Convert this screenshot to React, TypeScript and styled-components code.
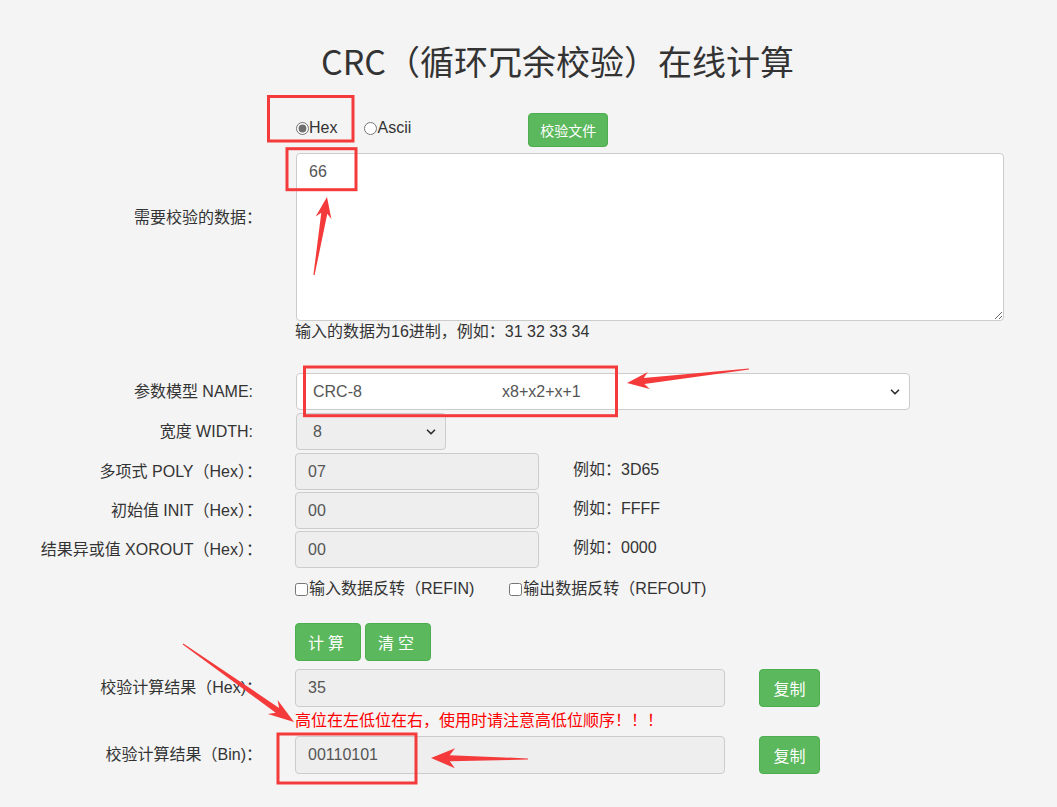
import React from 'react';
import styled, { createGlobalStyle } from 'styled-components';
import { ChevronDown } from 'lucide-react';

const GlobalStyle = createGlobalStyle`
  html, body {
    margin: 0;
    padding: 0;
    background: #f4f4f4;
  }
  body {
    font-family: "Liberation Sans", "Noto Sans CJK SC", sans-serif;
    font-size: 16px;
    line-height: 20px;
    color: #333;
  }
  * {
    box-sizing: border-box;
  }
`;

const Page = styled.div`
  position: relative;
  width: 1057px;
  min-height: 807px;
  overflow: hidden;
`;

const Title = styled.h1`
  margin: 0;
  padding: 43px 0 0 58px;
  text-align: center;
  font-family: "Noto Sans CJK SC", sans-serif;
  font-weight: normal;
  font-size: 34px;
  line-height: 36px;
  color: #333;
`;

const Form = styled.div`
  width: 1003px;
`;

const Row = styled.div<{ $mt: number }>`
  display: grid;
  grid-template-columns: 262px 1fr;
  column-gap: 33px;
  align-items: center;
  margin-top: ${p => p.$mt}px;
`;

const Label = styled.div<{ $top?: boolean; $pr?: number }>`
  text-align: right;
  font-size: 16px;
  line-height: 20px;
  white-space: nowrap;
  color: #333;
  align-self: ${p => (p.$top ? 'start' : 'center')};
  padding-top: ${p => (p.$top ? '55px' : '0')};
  padding-right: ${p => p.$pr ?? 0}px;
`;

const Content = styled.div`
  display: flex;
  align-items: center;
`;

const Stack = styled.div`
  display: flex;
  flex-direction: column;
`;

const Radios = styled.div`
  display: flex;
  align-items: center;
  margin-bottom: 4px;
`;

const RadioLabel = styled.label`
  display: flex;
  align-items: center;
  font-size: 16px;
  line-height: 20px;
  color: #333;
  margin-right: 26px;

  input {
    margin: 0 0 0 1px;
    width: 13px;
    height: 13px;
    accent-color: #6f6f6f;
  }

  &:last-child {
    margin-right: 0;
  }
`;

const GreenButton = styled.button<{ $h: number; $fs: number; $px: number; $ls?: number }>`
  height: ${p => p.$h}px;
  padding: 0 ${p => p.$px}px;
  background: #5cb85c;
  border: 1px solid #4cae4c;
  border-radius: 4px;
  color: #fff;
  font-family: "Liberation Sans", "Noto Sans CJK SC", sans-serif;
  font-size: ${p => p.$fs}px;
  letter-spacing: ${p => p.$ls ?? 0}px;
  cursor: pointer;
  white-space: nowrap;
`;

const FileButton = styled(GreenButton)`
  margin-left: 117px;
`;

const TextArea = styled.textarea`
  width: 708px;
  height: 168px;
  margin: 0 0 0 1px;
  padding: 8px 12px 6px;
  background: #fff;
  border: 1px solid #ccc;
  border-radius: 4px;
  font-family: "Liberation Sans", "Noto Sans CJK SC", sans-serif;
  font-size: 16px;
  line-height: 20px;
  color: #555;
  outline: none;
  display: block;
`;

const Hint = styled.div`
  margin-top: 1px;
  font-size: 16px;
  line-height: 20px;
  color: #333;
`;

const SelectBox = styled.div<{ $w: number; $gray?: boolean }>`
  display: flex;
  align-items: center;
  width: ${p => p.$w}px;
  height: 37px;
  margin-left: 1px;
  padding: 0 7px 0 16px;
  background: ${p => (p.$gray ? '#eee' : '#fff')};
  border: 1px solid #ccc;
  border-radius: 4px;
  color: #555;
  font-size: 16px;
`;

const SelectValue = styled.div`
  flex: 1;
  display: flex;
  white-space: nowrap;
`;

const ModelName = styled.span`
  width: 189px;
`;

const Chevron = styled(ChevronDown)`
  color: #333;
  flex: none;
`;

const Field = styled.input<{ $w: number; $h?: number }>`
  width: ${p => p.$w}px;
  height: ${p => p.$h ?? 37}px;
  margin: 0;
  padding: 0 12px;
  background: #eee;
  border: 1px solid #ccc;
  border-radius: 4px;
  font-family: "Liberation Sans", "Noto Sans CJK SC", sans-serif;
  font-size: 16px;
  color: #555;
  outline: none;
`;

const Example = styled.span`
  display: block;
  margin: -3px 0 0 34px;
  font-size: 16px;
  line-height: 20px;
  color: #333;
`;

const Checks = styled.div`
  display: flex;
  align-items: center;
  gap: 35px;
`;

const CheckLabel = styled.label`
  display: flex;
  align-items: center;
  font-size: 16px;
  line-height: 20px;
  color: #333;

  input {
    margin: 0 1px 0 0;
    width: 13px;
    height: 13px;
  }
`;

const Buttons = styled.div`
  display: flex;
  gap: 4px;
`;

const CopyButton = styled(GreenButton)`
  margin-left: 34px;
  width: 61px;
  padding: 0;
`;

const Warn = styled.div`
  margin-top: 2px;
  font-size: 16px;
  line-height: 20px;
  color: #f00;
`;

const Overlay = styled.svg`
  position: absolute;
  left: 0;
  top: 0;
  pointer-events: none;
`;

const RED = '#f43a3a';

type Arrow = { t: [number, number]; p: [number, number]; l: number; w: number };

const boxes = [
  { x: 268.5, y: 96.5, w: 84.5, h: 44.5 },
  { x: 287, y: 148.7, w: 69, h: 41 },
  { x: 304.5, y: 367, w: 312, h: 48.7 },
  { x: 278, y: 734, w: 138, h: 49 },
];

const arrows: Arrow[] = [
  { t: [314, 275], p: [327, 197], l: 21, w: 16 },
  { t: [749, 369], p: [627, 383], l: 22, w: 17 },
  { t: [183, 644], p: [294, 722], l: 26, w: 17 },
  { t: [528, 759], p: [431, 758], l: 24, w: 20 },
];

function arrowPoints({ t, p, l, w }: Arrow) {
  const dx = p[0] - t[0];
  const dy = p[1] - t[1];
  const len = Math.hypot(dx, dy);
  const ux = dx / len;
  const uy = dy / len;
  const nx = -uy;
  const ny = ux;
  const bx = p[0] - ux * l;
  const by = p[1] - uy * l;
  const jx = p[0] - ux * l * 0.78;
  const jy = p[1] - uy * l * 0.78;
  const neck = 3;
  const pts = [
    [t[0] + nx * 0.6, t[1] + ny * 0.6],
    [jx + nx * neck, jy + ny * neck],
    [bx + (nx * w) / 2, by + (ny * w) / 2],
    [p[0], p[1]],
    [bx - (nx * w) / 2, by - (ny * w) / 2],
    [jx - nx * neck, jy - ny * neck],
    [t[0] - nx * 0.6, t[1] - ny * 0.6],
  ];
  return pts.map(q => `${q[0].toFixed(1)},${q[1].toFixed(1)}`).join(' ');
}

const Annotations = () => (
  <Overlay width={1057} height={807} viewBox="0 0 1057 807">
    {boxes.map((b, i) => (
      <rect key={i} x={b.x} y={b.y} width={b.w} height={b.h} fill="none" stroke={RED} strokeWidth={3} />
    ))}
    {arrows.map((a, i) => (
      <polygon key={i} points={arrowPoints(a)} fill={RED} />
    ))}
  </Overlay>
);

const App = () => {
  return (
    <Page>
      <GlobalStyle />
      <Title>CRC（循环冗余校验）在线计算</Title>

      <Form>
        <Row $mt={34}>
          <Label />
          <Content>
            <Radios>
              <RadioLabel>
                <input type="radio" name="fmt" defaultChecked />
                Hex
              </RadioLabel>
              <RadioLabel>
                <input type="radio" name="fmt" />
                Ascii
              </RadioLabel>
            </Radios>
            <FileButton $h={34} $fs={14} $px={11}>校验文件</FileButton>
          </Content>
        </Row>

        <Row $mt={6}>
          <Label $top>需要校验的数据：</Label>
          <Stack>
            <TextArea defaultValue="66" />
            <Hint>输入的数据为16进制，例如：31 32 33 34</Hint>
          </Stack>
        </Row>

        <Row $mt={31}>
          <Label $pr={9}>参数模型 NAME:</Label>
          <Content>
            <SelectBox $w={614}>
              <SelectValue>
                <ModelName>CRC-8</ModelName>
                <span>x8+x2+x+1</span>
              </SelectValue>
              <Chevron size={14} strokeWidth={3} />
            </SelectBox>
          </Content>
        </Row>

        <Row $mt={3}>
          <Label $pr={9}>宽度 WIDTH:</Label>
          <Content>
            <SelectBox $w={150} $gray>
              <SelectValue>8</SelectValue>
              <Chevron size={14} strokeWidth={3} />
            </SelectBox>
          </Content>
        </Row>

        <Row $mt={3}>
          <Label>多项式 POLY（Hex）：</Label>
          <Content>
            <Field $w={244} readOnly defaultValue="07" />
            <Example>例如：3D65</Example>
          </Content>
        </Row>

        <Row $mt={2}>
          <Label>初始值 INIT（Hex）：</Label>
          <Content>
            <Field $w={244} readOnly defaultValue="00" />
            <Example>例如：FFFF</Example>
          </Content>
        </Row>

        <Row $mt={2}>
          <Label>结果异或值 XOROUT（Hex）：</Label>
          <Content>
            <Field $w={244} readOnly defaultValue="00" />
            <Example>例如：0000</Example>
          </Content>
        </Row>

        <Row $mt={11}>
          <Label />
          <Checks>
            <CheckLabel>
              <input type="checkbox" />
              输入数据反转（REFIN)
            </CheckLabel>
            <CheckLabel>
              <input type="checkbox" />
              输出数据反转（REFOUT)
            </CheckLabel>
          </Checks>
        </Row>

        <Row $mt={24}>
          <Label />
          <Buttons>
            <GreenButton $h={38} $fs={16} $px={12} $ls={4}>计算</GreenButton>
            <GreenButton $h={38} $fs={16} $px={12} $ls={4}>清空</GreenButton>
          </Buttons>
        </Row>

        <Row $mt={8}>
          <Label>校验计算结果（Hex)：</Label>
          <Content>
            <Field $w={430} $h={38} readOnly defaultValue="35" />
            <CopyButton $h={38} $fs={16} $px={0}>复制</CopyButton>
          </Content>
        </Row>

        <Row $mt={2}>
          <Label />
          <Warn>高位在左低位在右，使用时请注意高低位顺序！！！</Warn>
        </Row>

        <Row $mt={5}>
          <Label>校验计算结果（Bin)：</Label>
          <Content>
            <Field $w={430} $h={38} readOnly defaultValue="00110101" />
            <CopyButton $h={38} $fs={16} $px={0}>复制</CopyButton>
          </Content>
        </Row>
      </Form>

      <Annotations />
    </Page>
  );
};

export default App;
